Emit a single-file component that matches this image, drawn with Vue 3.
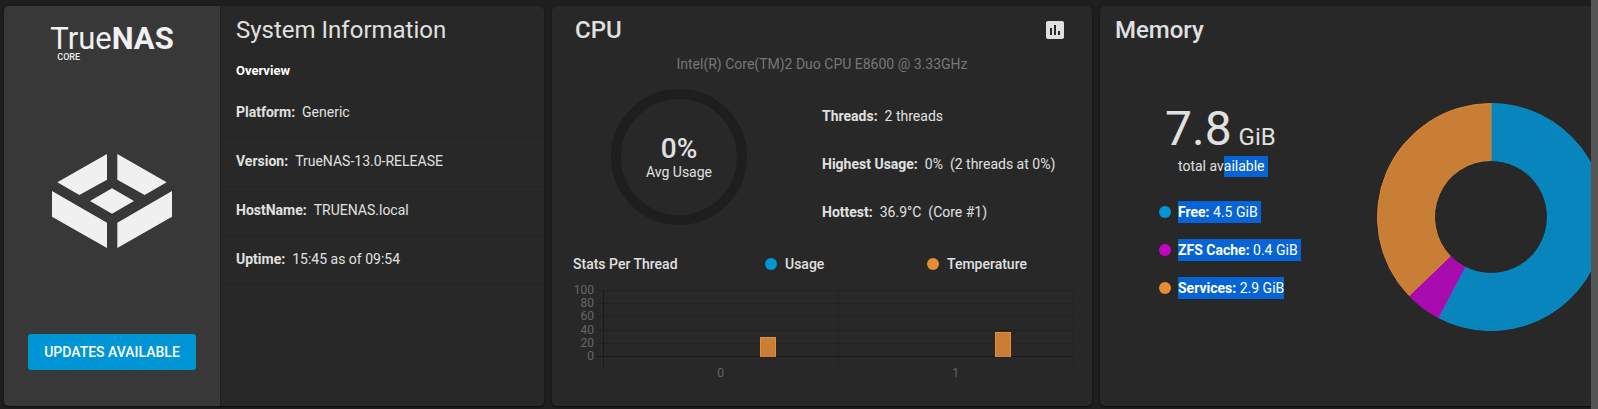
<script setup>
const facts = [
  { label: 'Platform:', value: 'Generic' },
  { label: 'Version:', value: 'TrueNAS-13.0-RELEASE' },
  { label: 'HostName:', value: 'TRUENAS.local' },
  { label: 'Uptime:', value: '15:45 as of 09:54' },
]

const cpuFacts = [
  { label: 'Threads:', value: '2 threads' },
  { label: 'Highest Usage:', value: '0%', note: '(2 threads at 0%)' },
  { label: 'Hottest:', value: '36.9°C', note: '(Core #1)' },
]

// Chart geometry, in viewBox units
const plot = { left: 51, right: 521, top: 10, bottom: 76 }
const scaleY = (v) => Math.round(plot.bottom - (v / 100) * (plot.bottom - plot.top))
const ticks = [100, 80, 60, 40, 20, 0].map((v) => ({ v, y: scaleY(v) }))
const slot = (plot.right - plot.left) / 2
const threads = [29, 37].map((temp, i) => ({
  id: i,
  center: plot.left + slot * (i + 0.5),
  x: Math.round(plot.left + slot * (i + 0.5) + 39),
  y: scaleY(temp),
  h: plot.bottom - scaleY(temp) + 1,
}))

const memory = [
  { name: 'Free:', size: 4.5, tone: 'blue', spaced: true },
  { name: 'ZFS Cache:', size: 0.4, tone: 'magenta', spaced: true },
  { name: 'Services:', size: 2.9, tone: 'orange', spaced: false },
]

const total = memory.reduce((sum, m) => sum + m.size, 0)
const point = (r, turn) => {
  const a = turn * 2 * Math.PI
  return `${(114 + r * Math.sin(a)).toFixed(2)} ${(114 - r * Math.cos(a)).toFixed(2)}`
}
let start = 0
const slices = memory.map((m) => {
  const end = start + m.size / total
  const large = end - start > 0.5 ? 1 : 0
  const d = `M${point(113.5, start)} A113.5 113.5 0 ${large} 1 ${point(113.5, end)} L${point(56.5, end)} A56.5 56.5 0 ${large} 0 ${point(56.5, start)} Z`
  start = end
  return { tone: m.tone, d }
})
</script>

<template>
  <div class="page">
    <main class="cards">
      <section class="card system">
        <div class="brand">
          <div class="wordmark">
            <div class="name">True<b>NAS</b></div>
            <div class="edition">CORE</div>
          </div>
          <svg class="cube" viewBox="0 0 360 282" aria-hidden="true">
            <path d="M16 85 165 0V77L82 123ZM196 0 344 85 278 123 196 77ZM114 141 180 103 246 141 180 179ZM0 111 165 206V282L0 188ZM360 111V188L196 282V206Z" />
          </svg>
          <button type="button" class="update">UPDATES AVAILABLE</button>
        </div>
        <div class="info">
          <h2 class="title regular">System Information</h2>
          <h3 class="overview">Overview</h3>
          <ul class="facts">
            <li v-for="f in facts" :key="f.label"><strong>{{ f.label }}</strong><span>{{ f.value }}</span></li>
          </ul>
        </div>
      </section>

      <section class="card">
        <header class="head cpu-head">
          <h2 class="title">CPU</h2>
          <button type="button" class="report" aria-label="CPU reports">
            <svg viewBox="0 0 24 24"><path d="M19 3H5c-1.100 0-2 .9-2 2v14c0 1.100.9 2 2 2h14c1.100 0 2-.9 2-2V5c0-1.100-.9-2-2-2zM9 17H7v-7h2v7zm4 0h-2V7h2v10zm4 0h-2v-4h2v4z" /></svg>
          </button>
        </header>
        <p class="model">Intel(R) Core(TM)2 Duo CPU E8600 @ 3.33GHz</p>
        <div class="cpu-body">
          <div class="gauge-cell">
            <div class="gauge">
              <span class="percent">0%</span>
              <span class="caption">Avg Usage</span>
            </div>
          </div>
          <ul class="cpu-facts">
            <li v-for="f in cpuFacts" :key="f.label">
              <strong>{{ f.label }}</strong><span>{{ f.value }}</span><span v-if="f.note">{{ f.note }}</span>
            </li>
          </ul>
        </div>
        <div class="legend">
          <span>Stats Per Thread</span>
          <span class="key"><i class="dot blue"></i>Usage</span>
          <span class="key"><i class="dot orange"></i>Temperature</span>
        </div>
        <svg class="chart" viewBox="0 0 540 104" role="img" aria-label="Stats per thread">
          <g v-for="t in ticks" :key="t.v">
            <rect :class="t.v ? 'grid' : 'axis'" x="44" :y="t.y" width="478" height="1" />
            <text x="42" :y="t.y + 4" text-anchor="end">{{ t.v }}</text>
          </g>
          <rect class="axis" :x="plot.left" :y="plot.top" width="1" height="77" />
          <rect class="grid" :x="plot.left + slot" :y="plot.top" width="1" height="77" />
          <rect class="grid" :x="plot.right" :y="plot.top" width="1" height="77" />
          <g v-for="t in threads" :key="t.id">
            <rect class="bar-edge" :x="t.x" :y="t.y" width="16" :height="t.h" />
            <rect class="bar" :x="t.x + 1" :y="t.y + 1" width="14" :height="t.h - 1" />
            <text :x="t.center" y="97" text-anchor="middle">{{ t.id }}</text>
          </g>
        </svg>
      </section>

      <section class="card">
        <header class="head memory-head">
          <h2 class="title">Memory</h2>
        </header>
        <div class="memory-body">
          <div>
            <div class="amount"><span>7.8</span><small>GiB</small></div>
            <div class="total">total av<mark class="trail">ailable</mark></div>
            <ul class="usage">
              <li v-for="m in memory" :key="m.name">
                <i class="dot" :class="m.tone"></i>
                <mark :class="{ trail: m.spaced }"><strong>{{ m.name }}</strong> {{ m.size }} GiB</mark>
              </li>
            </ul>
          </div>
          <svg class="donut" viewBox="0 0 228 228" role="img" aria-label="Memory usage">
            <path v-for="s in slices" :key="s.tone" :class="s.tone" :d="s.d" />
          </svg>
        </div>
      </section>
    </main>
    <div class="scrollbar"></div>
  </div>
</template>

<style>
body {
  background: #1e1e1e;
}
</style>

<style scoped>
.page {
  display: flex;
  min-height: 100vh;
  background: #1e1e1e;
  color: #e0e0e0;
  font: 14px/20px Roboto, "Liberation Sans", sans-serif;
}
.cards {
  flex: 1;
  min-width: 0;
  overflow: hidden;
  display: grid;
  grid-template-columns: repeat(3, minmax(540px, 1fr));
  gap: 8px;
  padding: 6px 0 3px 4px;
}
.scrollbar {
  width: 7px;
  background: #555;
}
.card {
  background: #282828;
  border-radius: 5px;
  box-shadow: 0 1px 2px #0c0c0c;
  overflow: hidden;
}
h2,
h3,
p,
ul {
  margin: 0;
  padding: 0;
}
ul {
  list-style: none;
}
strong {
  font-weight: 700;
}
button {
  border: 0;
  padding: 0;
  font: inherit;
  color: inherit;
}
.title {
  font-size: 24px;
  line-height: 48px;
  font-weight: 500;
}
.title.regular {
  font-weight: 400;
}
.system {
  display: grid;
  grid-template-columns: 2fr 3fr;
}
.brand {
  background: #383838;
  display: flex;
  flex-direction: column;
  align-items: center;
  justify-content: space-between;
  padding: 19px 0 36px;
}
.wordmark {
  color: #f0f0f0;
  padding-bottom: 6px;
}
.name {
  font-size: 31px;
  line-height: 28px;
  font-weight: 400;
}
.name b {
  font-weight: 700;
}
.edition {
  font-size: 9px;
  line-height: 8px;
  font-weight: 500;
  padding-left: 7px;
}
.cube {
  width: 120px;
  height: 94px;
  fill: #f0f0f0;
}
.update {
  background: #0095d5;
  color: #fff;
  border-radius: 3px;
  padding: 8px 16px;
  font-weight: 500;
}
.info {
  border-left: 1px solid #202020;
}
.info .title,
.overview {
  padding-left: 15px;
}
.overview {
  color: #fff;
  font-size: 13px;
  line-height: 34px;
  font-weight: 700;
}
.facts {
  margin-top: 1px;
}
.facts li {
  display: flex;
  gap: 7px;
  padding: 13px 15px 15px;
  border-bottom: 1px solid #232323;
}
.head {
  display: flex;
  justify-content: space-between;
  align-items: center;
}
.cpu-head {
  padding: 0 25px 0 23px;
}
.memory-head {
  padding: 0 15px;
}
.report {
  background: none;
  height: 24px;
}
.report svg {
  display: block;
  width: 24px;
  height: 24px;
  fill: #e0e0e0;
}
.model {
  color: #777;
  text-align: center;
}
.cpu-body {
  display: grid;
  grid-template-columns: 1fr 1fr;
  margin-top: 15px;
}
.gauge-cell {
  display: flex;
  justify-content: center;
  padding-right: 16px;
}
.gauge {
  box-sizing: border-box;
  width: 136px;
  height: 136px;
  border: 10px solid #1e1e1e;
  border-radius: 50%;
  display: flex;
  flex-direction: column;
  align-items: center;
  justify-content: center;
}
.percent {
  font-size: 28px;
  line-height: 30px;
  font-weight: 500;
}
.caption {
  line-height: 16px;
}
.cpu-facts {
  display: flex;
  flex-direction: column;
  gap: 28px;
  padding-top: 17px;
}
.cpu-facts li {
  display: flex;
  gap: 7px;
}
.legend {
  display: grid;
  grid-template-columns: 192px 162px 1fr;
  margin-top: 29px;
  padding-left: 21px;
  font-weight: 500;
}
.key,
.usage li {
  display: flex;
  align-items: center;
  gap: 8px;
}
.usage li {
  gap: 7px;
}
.dot {
  width: 12px;
  height: 12px;
  border-radius: 50%;
}
.dot.blue {
  background: #0095d5;
}
.dot.magenta {
  background: #c006c7;
}
.dot.orange {
  background: #e68d37;
}
.chart {
  display: block;
  width: 100%;
  margin-top: 6px;
  font-size: 12px;
}
.chart text {
  fill: #666;
}
.grid {
  fill: #222;
}
.axis {
  fill: #1a1a1a;
}
.bar-edge {
  fill: #e68d37;
}
.bar {
  fill: #c97e35;
}
.memory-body {
  display: grid;
  grid-template-columns: 218px 228px;
  padding: 48px 0 0 59px;
}
.amount {
  display: flex;
  align-items: baseline;
  gap: 7px;
  font-size: 48px;
  line-height: 54px;
  padding-left: 6px;
}
.amount small {
  font-size: 24px;
  line-height: 24px;
}
.total {
  line-height: 21px;
  padding-left: 19px;
  display: flex;
}
.usage {
  display: flex;
  flex-direction: column;
  gap: 16px;
  margin-top: 24px;
}
mark {
  background: #0664d6;
  color: #fff;
  line-height: 22px;
}
.total mark {
  line-height: 21px;
}
.trail {
  padding-right: 3px;
}
.donut {
  width: 228px;
  height: 228px;
  margin-top: 1px;
}
.donut path {
  stroke-width: 1;
}
.donut .blue {
  fill: #0885bc;
  stroke: #0590cc;
}
.donut .magenta {
  fill: #a80bae;
  stroke: #b60abd;
}
.donut .orange {
  fill: #c97e35;
  stroke: #d98737;
}
</style>
